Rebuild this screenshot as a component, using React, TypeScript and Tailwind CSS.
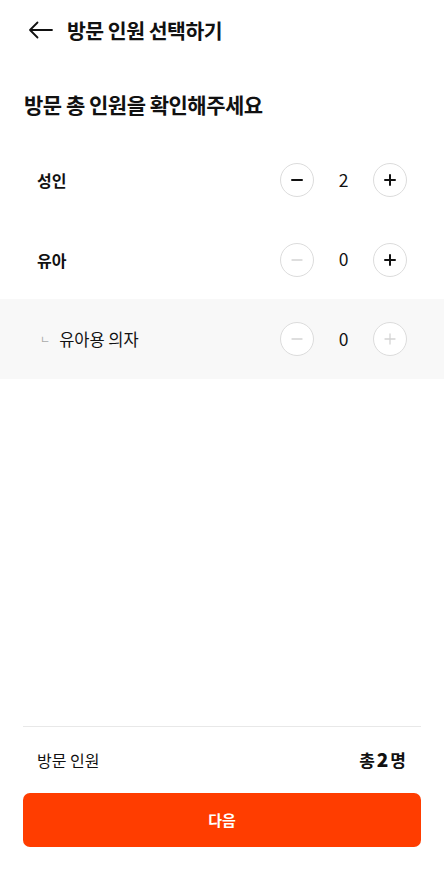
import React, { FC } from "react";

const font = { fontFamily: '"Noto Sans CJK KR", "Noto Sans", sans-serif' };

interface CounterProps {
  value: number;
  minusDisabled?: boolean;
  plusDisabled?: boolean;
}

const Counter: FC<CounterProps> = ({ value, minusDisabled, plusDisabled }) => {
  return (
    <div className="flex items-center">
      <button className="flex h-[34px] w-[34px] items-center justify-center rounded-full border border-[#dcdcdc] bg-white">
        <svg width="14" height="14" viewBox="0 0 14 14">
          <path
            d="M2 7h10"
            stroke={minusDisabled ? "#d4d4d4" : "#111"}
            strokeWidth={minusDisabled ? 1.3 : 2}
            strokeLinecap="round"
          />
        </svg>
      </button>
      <span className="w-[59px] text-center text-[17.5px] text-[#111]">{value}</span>
      <button className="flex h-[34px] w-[34px] items-center justify-center rounded-full border border-[#dcdcdc] bg-white">
        <svg width="14" height="14" viewBox="0 0 14 14">
          <path
            d="M2 7h10M7 2v10"
            stroke={plusDisabled ? "#d4d4d4" : "#111"}
            strokeWidth={plusDisabled ? 1.3 : 2}
            strokeLinecap="round"
          />
        </svg>
      </button>
    </div>
  );
};

export default function App() {
  return (
    <div className="flex min-h-screen flex-col bg-white text-[#111]" style={font}>
      <div className="flex h-[60px] items-center px-[28px]">
        <svg width="25" height="18" viewBox="0 0 25 18" fill="none">
          <path d="M24 9H2M9.5 1.5L2 9l7.5 7.5" stroke="#111" strokeWidth="1.8" strokeLinecap="round" strokeLinejoin="round" />
        </svg>
        <h1 className="ml-[14px] text-[20.5px] font-bold leading-[28px] tracking-[-0.5px]">방문 인원 선택하기</h1>
      </div>

      <h2 className="mt-[30px] px-[24px] text-[21px] font-bold leading-[28px] tracking-[-0.5px]">
        방문 총 인원을 확인해주세요
      </h2>

      <div className="mt-[22px]">
        <div className="flex h-[80px] items-center justify-between pl-[37px] pr-[37px]">
          <span className="text-[16px] font-bold">성인</span>
          <Counter value={2} />
        </div>
        <div className="flex h-[79px] items-center justify-between pl-[37px] pr-[37px]">
          <span className="text-[16px] font-bold">유아</span>
          <Counter value={0} minusDisabled />
        </div>
        <div className="flex h-[80px] items-center justify-between bg-[#f8f8f8] pl-[40px] pr-[37px]">
          <div className="flex items-center">
            <span className="text-[11px] text-[#aaa]">ㄴ</span>
            <span className="ml-[9px] text-[16.5px]">유아용 의자</span>
          </div>
          <Counter value={0} minusDisabled plusDisabled />
        </div>
      </div>

      <div className="mt-auto px-[23px] pb-[29px]">
        <div className="border-t border-[#e8e8e8]">
          <div className="flex items-center justify-between pl-[14px] pr-[15px] pt-[21px] pb-[22px] leading-[22px]">
            <span className="text-[16px]">방문 인원</span>
            <span className="text-[17px] font-bold">
              총<span className="mx-[2px] text-[19px] font-extrabold">2</span>명
            </span>
          </div>
        </div>
        <button className="flex h-[54px] w-full items-center justify-center rounded-[7px] bg-[#ff3d00] text-[15px] font-bold text-white">
          다음
        </button>
      </div>
    </div>
  );
}
